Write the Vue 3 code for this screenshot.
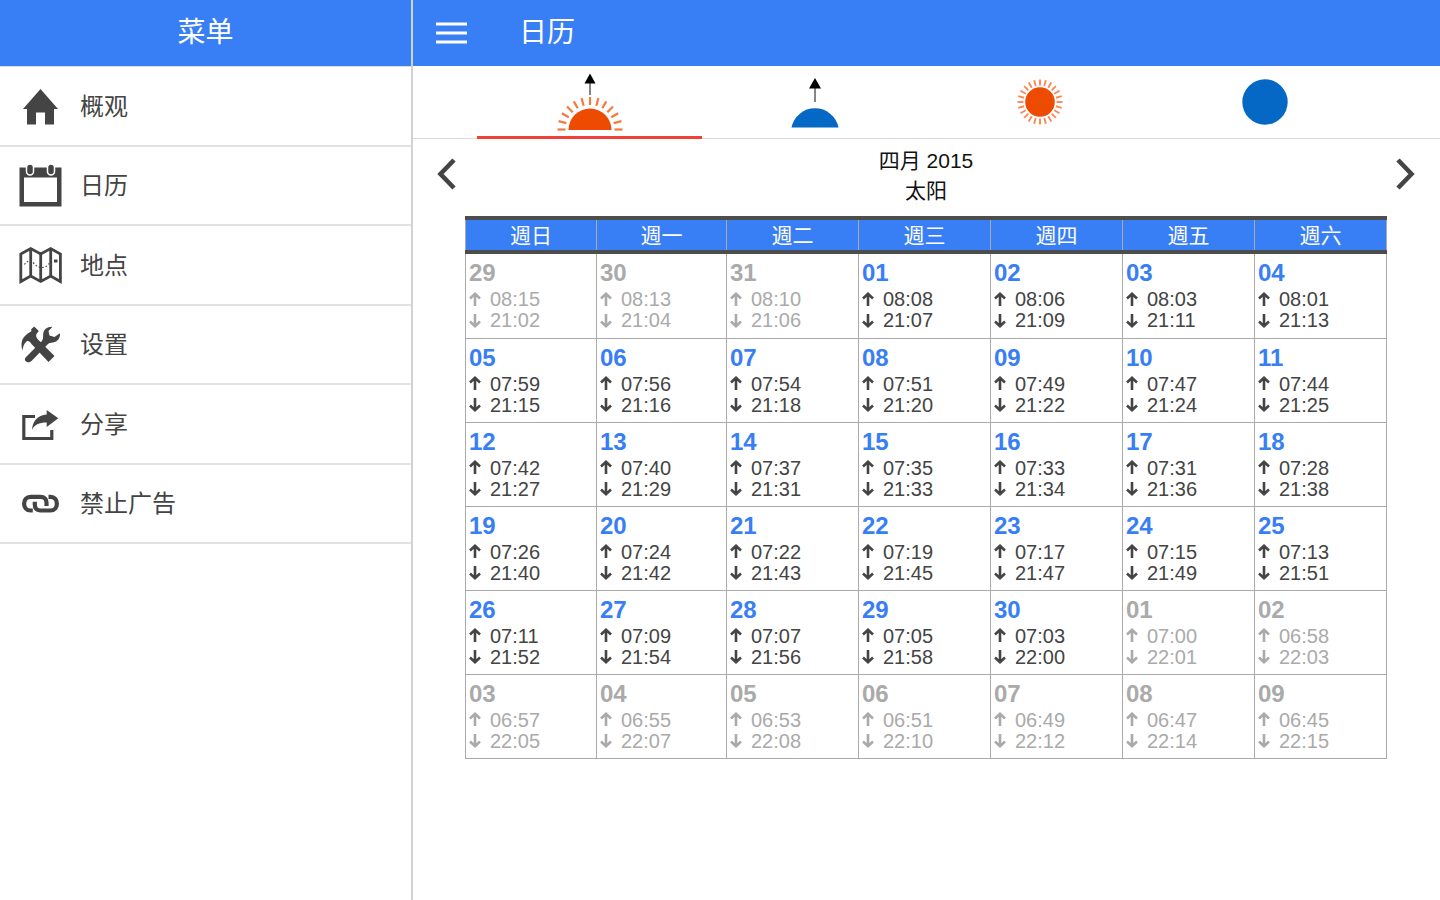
<script setup>
const menu = [
  { id: 'home', label: '概观' },
  { id: 'calendar', label: '日历' },
  { id: 'map', label: '地点' },
  { id: 'tools', label: '设置' },
  { id: 'share', label: '分享' },
  { id: 'link', label: '禁止广告' }
]
const weekdays = ['週日', '週一', '週二', '週三', '週四', '週五', '週六']
const source = [
  '29 08:15 21:02,30 08:13 21:04,31 08:10 21:06,01 08:08 21:07,02 08:06 21:09,03 08:03 21:11,04 08:01 21:13',
  '05 07:59 21:15,06 07:56 21:16,07 07:54 21:18,08 07:51 21:20,09 07:49 21:22,10 07:47 21:24,11 07:44 21:25',
  '12 07:42 21:27,13 07:40 21:29,14 07:37 21:31,15 07:35 21:33,16 07:33 21:34,17 07:31 21:36,18 07:28 21:38',
  '19 07:26 21:40,20 07:24 21:42,21 07:22 21:43,22 07:19 21:45,23 07:17 21:47,24 07:15 21:49,25 07:13 21:51',
  '26 07:11 21:52,27 07:09 21:54,28 07:07 21:56,29 07:05 21:58,30 07:03 22:00,01 07:00 22:01,02 06:58 22:03',
  '03 06:57 22:05,04 06:55 22:07,05 06:53 22:08,06 06:51 22:10,07 06:49 22:12,08 06:47 22:14,09 06:45 22:15'
]
const weeks = source.map((row, r) =>
  row.split(',').map((cell, c) => {
    const [day, rise, set] = cell.split(' ')
    const n = r * 7 + c
    return { day, rise, set, other: n < 3 || n > 32 }
  })
)
const halfRays = Array.from({ length: 13 }, (_, i) => -90 + i * 15)
const fullRays = Array.from({ length: 24 }, (_, i) => i * 15)
</script>

<template>
  <div class="app">
    <aside class="side">
      <header class="bar side-bar"><h2>菜单</h2></header>
      <nav class="menu" aria-label="菜单">
        <a v-for="m in menu" :key="m.id" href="#" class="item">
          <svg class="icon" viewBox="0 0 48 48" aria-hidden="true">
            <path v-if="m.id === 'home'" d="M24.5 7 42 27H38V42.5H29V30.500H20V42.500H11V27H7Z" />
            <g v-else-if="m.id === 'calendar'">
              <path fill-rule="evenodd" d="M3.500 6.500H45.500V45.500H3.500ZM8 16.500V41H41V16.500Z" />
              <rect x="10.500" y="3" width="7" height="11" rx="3.500" class="ring" />
              <rect x="31.500" y="3" width="7" height="11" rx="3.500" class="ring" />
            </g>
            <g v-else-if="m.id === 'map'" class="line">
              <path stroke-width="2.800" d="M4.800 13 14.700 7.500 24.700 13 34.700 7.500 44.400 13V40.500L34.700 35 24.700 40.500 14.700 35 4.800 40.500Z" />
              <path stroke-width="2.800" d="M14.700 7.500V35.500M24.700 12.500V40.500M34.700 7.500V35.500" />
              <path stroke-width="1.200" stroke-dasharray="1.500 2" d="M8.500 23.500C11 19.500 15 18.500 18 22.500S27 27.500 30 25.500 34 20.500 37 20" />
              <path stroke-width="3" d="M38 20H41.500" />
            </g>
            <g v-else-if="m.id === 'tools'">
              <path d="M6.500 30.500C4.500 24.500 5.500 18.500 10 15 12 13 14 12.500 15.500 11L15 9.500 18.200 6.500 22.800 11 20.500 14C19.500 15.500 20.500 18 22 19.500L38.500 36 32.500 42 15.500 24C14 21.500 12 20.500 10.500 21.500 8 23.500 7 26.500 6.500 30.500Z" />
              <path d="M10 37 25.500 21.500C27.500 19.500 27 16.500 27.200 14 27.600 9.500 31 6.500 36.500 6.700L32.500 11 33.500 15.500 38.500 17 44 13.300C44.500 18 41.500 22 37 22.500 34.500 22.800 33 23 31.500 24.500L15.500 41C12 44.500 6.500 40.500 10 37Z" />
            </g>
            <g v-else-if="m.id === 'share'">
              <path class="line" stroke-width="3.200" d="M19 16.500H7.800V38.500H35.800V30" />
              <path d="M30.700 10 42.300 18.300 30.700 27V22.500C23 22.500 18.500 24.500 16 30 16.500 21.500 21.500 15 30.700 14.500Z" />
            </g>
            <g v-else class="line">
              <path stroke-width="4.200" d="M16.800 31.500H14.500C6 31.500 6 17.800 14.500 17.800H24.500C28.500 17.800 30.500 20.300 30.500 23.300V27" />
              <path stroke-width="4.200" d="M18.800 22.800V25.800C18.800 29.300 21 31.500 24.500 31.500H34.500C43 31.500 43 17.800 34.500 17.800H32.500" />
            </g>
          </svg>
          <span>{{ m.label }}</span>
        </a>
      </nav>
    </aside>

    <main class="main">
      <header class="bar main-bar">
        <button class="burger" aria-label="菜单">
          <svg width="31" height="24" viewBox="0 0 31 24"><path d="M0 3H31M0 12H31M0 21H31" stroke="#fff" stroke-width="3" /></svg>
        </button>
        <h1>日历</h1>
      </header>

      <div class="tabs" role="tablist">
        <button class="tab active" role="tab" aria-selected="true" aria-label="日出">
          <svg width="72" height="72" viewBox="0 0 72 72">
            <path d="M36 14V29" stroke="#666" stroke-width="1.600" />
            <path d="M36 7.500 41.500 17.500H30.500Z" />
            <path d="M14.500 64A21.500 21.500 0 0 1 57.500 64Z" fill="#ee4b02" />
            <path v-for="a in halfRays" :key="a" d="M36 31V39" stroke="#f4793f" stroke-width="2.200" :transform="`rotate(${a} 36 63.500)`" />
          </svg>
        </button>
        <button class="tab" role="tab" aria-selected="false" aria-label="月出">
          <svg width="72" height="72" viewBox="0 0 72 72">
            <path d="M36 18V36" stroke="#666" stroke-width="1.600" />
            <path d="M36 12 42 22.500H30Z" />
            <path d="M12.500 61.500A24 24 0 0 1 59.500 61.500Z" fill="#0568c5" />
          </svg>
        </button>
        <button class="tab" role="tab" aria-selected="false" aria-label="太阳">
          <svg width="72" height="72" viewBox="0 0 72 72">
            <circle cx="36" cy="36" r="14.800" fill="#ee4b02" />
            <path v-for="a in fullRays" :key="a" d="M36 13.500V19.500" stroke="#f7895a" stroke-width="1.900" :transform="`rotate(${a} 36 36)`" />
          </svg>
        </button>
        <button class="tab" role="tab" aria-selected="false" aria-label="月亮">
          <svg width="72" height="72" viewBox="0 0 72 72"><circle cx="36" cy="36" r="22.700" fill="#0568c5" /></svg>
        </button>
      </div>

      <div class="month">
        <button class="nav-btn" aria-label="上个月">
          <svg width="20" height="34" viewBox="0 0 20 34"><path d="M17 3 3.500 17 17 31" /></svg>
        </button>
        <div class="caption"><div>四月 2015</div><div>太阳</div></div>
        <button class="nav-btn" aria-label="下个月">
          <svg width="20" height="34" viewBox="0 0 20 34"><path d="M3 3 16.500 17 3 31" /></svg>
        </button>
      </div>

      <div class="sheet">
        <table>
          <colgroup><col class="c1" /><col class="c2" /><col v-for="n in 5" :key="n" /></colgroup>
          <thead>
            <tr><th v-for="d in weekdays" :key="d" scope="col">{{ d }}</th></tr>
          </thead>
          <tbody>
            <tr v-for="(week, i) in weeks" :key="i">
              <td v-for="(c, j) in week" :key="j" :class="{ other: c.other }">
                <div class="day">{{ c.day }}</div>
                <div class="time">
                  <svg width="12" height="16" viewBox="0 0 12 16"><path d="M6 14V2M1 6.500 6 1.800 11 6.500" /></svg>{{ c.rise }}
                </div>
                <div class="time">
                  <svg width="12" height="16" viewBox="0 0 12 16"><path d="M6 1V13M1 8.500 6 13.200 11 8.500" /></svg>{{ c.set }}
                </div>
              </td>
            </tr>
          </tbody>
        </table>
      </div>
    </main>
  </div>
</template>

<style>
body { margin: 0; background: #fff; }
</style>

<style scoped>
.app {
  display: grid;
  grid-template-columns: 413px 1fr;
  min-height: 100vh;
  font-family: "Liberation Sans", "Noto Sans CJK SC", sans-serif;
  color: #444;
}
.side { border-right: 2px solid #d2d2d2; }
h1, h2 { margin: 0; font-size: 28px; font-weight: 400; line-height: 40px; }
.bar {
  box-sizing: border-box;
  height: 66px;
  display: flex;
  align-items: center;
  background: #387ef5;
  color: #fff;
}
.side-bar { justify-content: center; }
button { border: 0; padding: 0; background: none; color: inherit; font: inherit; cursor: pointer; }
svg { display: block; }
.main-bar { padding-left: 23px; gap: 52px; }
.menu { display: grid; grid-auto-rows: 1fr; min-height: 477px; border-top: 1px solid #dedede; }
.item {
  display: flex;
  align-items: center;
  gap: 16px;
  padding: 0 16px;
  border-bottom: 2px solid #e2e2e2;
  color: #444;
  font-size: 24px;
  line-height: 32px;
  text-decoration: none;
}
.item span { padding-top: 2px; }
.icon { width: 48px; height: 48px; fill: #444; }
.ring { stroke: #fff; stroke-width: 1.5; }
.line { fill: none; stroke: #444; }
.tabs {
  display: grid;
  grid-template-columns: repeat(4, 1fr);
  padding: 0 63px 0 64px;
  border-bottom: 1px solid #dcdcdc;
}
.tab { display: flex; justify-content: center; height: 72px; }
.active { box-shadow: 0 1px #ef4136, inset 0 -2px #ef4136; }
.month {
  display: flex;
  justify-content: space-between;
  padding: 7px 25px 0 24px;
  height: 70px;
}
.nav-btn { height: 56px; }
.nav-btn path { fill: none; stroke: #444; stroke-width: 4.6; }
.caption { font-size: 21px; line-height: 30px; text-align: center; color: #111; }
.sheet { padding: 0 53px 0 52px; }
table { width: 100%; border-collapse: collapse; table-layout: fixed; }
.c1 { width: 131px; }
.c2 { width: 130px; }
th {
  height: 28px;
  padding: 2px 0 0;
  background: #387ef5;
  border: 1px solid #aaa;
  border-top: 4px solid #4d4d4d;
  border-bottom: 4px solid #4d4d4d;
  color: #fff;
  font-size: 21px;
  font-weight: 400;
  line-height: 28px;
}
td {
  box-sizing: border-box;
  height: 84px;
  padding: 3px 0 0 3px;
  border: 1px solid #aaa;
  vertical-align: top;
}
tbody tr:first-child td { height: 86px; }
.day { color: #387ef5; font-size: 24px; font-weight: 700; line-height: 32px; }
.time { display: flex; align-items: center; gap: 9px; font-size: 20px; line-height: 21px; }
.time path { fill: none; stroke: currentColor; stroke-width: 2.6; }
.other, .other .day { color: #aaa; }
</style>
